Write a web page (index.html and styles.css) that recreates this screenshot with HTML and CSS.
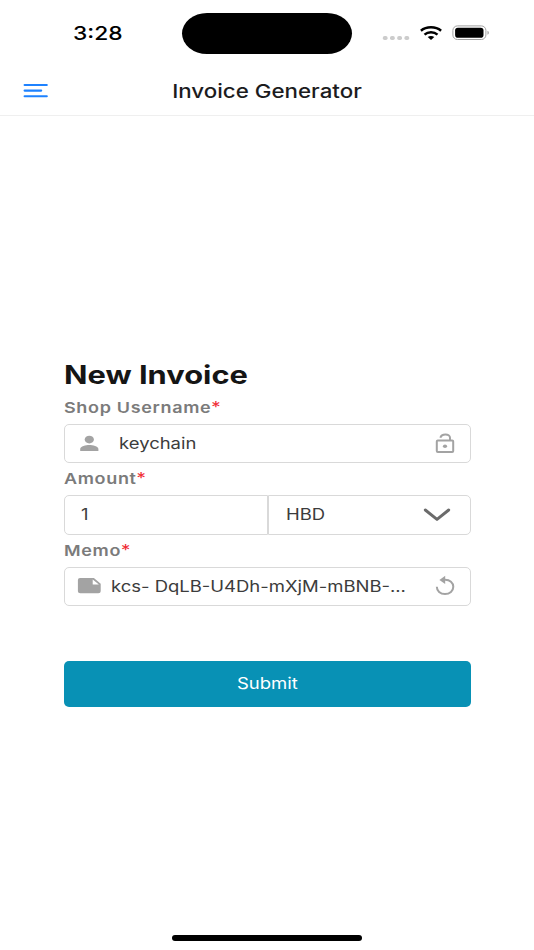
FILE: index.html
```
<!DOCTYPE html>
<html lang="en">

<head>
    <meta charset="UTF-8">
    <meta name="viewport" content="width=device-width, initial-scale=1.0">
    <title>Invoice Generator</title>
    <link rel="stylesheet" href="styles.css">
</head>

<body>
    <!-- Status bar -->
    <div class="status-bar">
        <div class="status-time"><span class="wide">3:28</span></div>
        <div class="island"></div>
        <div class="status-icons">
            <svg class="signal" width="28" height="6" viewBox="0 0 28 6" fill="#ccc">
                <rect x="0.8" y="1" width="4.8" height="4" rx="1.8" />
                <rect x="8" y="1" width="4.8" height="4" rx="1.8" />
                <rect x="15.2" y="1" width="4.8" height="4" rx="1.8" />
                <rect x="22.4" y="1" width="4.8" height="4" rx="1.8" />
            </svg>
            <svg class="wifi" width="22" height="14" viewBox="0 0 22 14" fill="none" stroke="#000" stroke-width="2.5">
                <path d="M0.9 4.8C6.4 0.2 15.6 0.2 21.1 4.8" />
                <path d="M4.5 8.6C8 5.6 14 5.6 17.5 8.6" />
                <path d="M7.7 11.1C9.5 9.5 12.5 9.5 14.3 11.1L11 13.9Z" fill="#000" stroke="none" />
            </svg>
            <svg class="battery" width="38" height="16" viewBox="0 0 38 16">
                <rect x="0.9" y="0.9" width="33" height="13.6" rx="4.5" fill="none" stroke="#a0a0a0" />
                <rect x="3.1" y="2.8" width="28.4" height="9.9" rx="2.8" />
                <path d="M35.5 5.7C37.3 6.3 37.3 9.2 35.5 9.8Z" fill="#999" />
            </svg>
        </div>
    </div>

    <!-- Header -->
    <header class="header">
        <button class="menu-button" aria-label="Menu">
            <svg width="26" height="16" viewBox="0 0 26 16" fill="none" stroke="#1e82ff" stroke-width="2.1" stroke-linecap="round">
                <path d="M1.6 2H23.8M1.6 7.6H18.2M1.6 13.2H23.8" />
            </svg>
        </button>
        <h1 class="header-title"><span class="wide">Invoice Generator</span></h1>
    </header>

    <!-- Invoice form -->
    <main>
        <h2 class="form-title"><span class="wide">New Invoice</span></h2>

        <div class="label"><span class="wide">Shop Username<span class="required">*</span></span></div>
        <div class="field">
            <svg class="icon-left" width="26" height="20" viewBox="0 0 26 20" fill="#a3a3a3">
                <ellipse cx="13.3" cy="5.6" rx="4.6" ry="3.9" />
                <path d="M4.2 17V15C4.2 12.5 10 11.1 13.3 11.1S22.4 12.5 22.4 15V17Z" />
            </svg>
            <span class="value username"><span class="wide">keychain</span></span>
            <svg class="icon-right" width="22" height="22" viewBox="0 0 22 22" fill="none" stroke="#a3a3a3" stroke-width="2">
                <rect x="2.8" y="7.6" width="16.4" height="11.4" rx="1" />
                <path d="M6.4 4.8C7.3 0.4 16 0.2 16 4.8V7.6" />
                <ellipse cx="11" cy="13.3" rx="2.1" ry="1.8" fill="#a3a3a3" stroke="none" />
            </svg>
        </div>

        <div class="label"><span class="wide">Amount<span class="required">*</span></span></div>
        <div class="field-row">
            <div class="field amount"><span class="value"><span class="wide">1</span></span></div>
            <div class="field currency">
                <span class="value"><span class="wide">HBD</span></span>
                <svg class="chevron" width="28" height="14" viewBox="0 0 28 14" fill="none" stroke="#6b6b6b" stroke-width="2.9" stroke-linecap="round" stroke-linejoin="round">
                    <path d="M2.3 2L14 11.4L25.7 2" />
                </svg>
            </div>
        </div>

        <div class="label"><span class="wide">Memo<span class="required">*</span></span></div>
        <div class="field">
            <svg class="icon-left" width="26" height="20" viewBox="0 0 26 20" fill="#a3a3a3">
                <path fill-rule="evenodd" d="M4 2.1H17.9L24.7 7.7V15.3Q24.7 17.2 22.3 17.2H4.3Q1.9 17.2 1.9 15.3V4Q1.9 2.1 4 2.1ZM16.7 3.5V8.4H22.9Z" />
            </svg>
            <span class="value memo"><span class="wide">kcs- DqLB-U4Dh-mXjM-mBNB-...</span></span>
            <svg class="icon-right" width="22" height="22" viewBox="0 0 22 22" fill="none" stroke="#a3a3a3" stroke-width="2">
                <path d="M10.5 4.8C16 4.5 19.3 7.8 19.3 11.8C19.3 15.8 15.8 19 11 19C6.2 19 2.8 15.8 2.8 11.8" />
                <path d="M11.2 0.8V9L5.4 4.9Z" fill="#a3a3a3" stroke="none" />
            </svg>
        </div>

        <button class="submit"><span class="wide">Submit</span></button>
    </main>

    <div class="home-indicator"></div>
</body>

</html>
```
FILE: styles.css
```
* {
    box-sizing: border-box;
}

body {
    margin: 0;
    height: 950px;
    display: flex;
    flex-direction: column;
    background: #fff;
    color: #1c1c1e;
    font-family: Inter, "Liberation Sans", sans-serif;
    overflow: hidden;
}

svg {
    display: block;
    flex-shrink: 0;
}

button {
    border: 0;
    padding: 0;
    background: none;
    font-family: inherit;
}

/* Extended letterforms */
.wide {
    display: inline-block;
    white-space: nowrap;
    transform: scaleX(1.2);
    transform-origin: left center;
}

/* Status bar */
.status-bar {
    display: grid;
    grid-template-columns: 182px 170px 1fr;
    height: 66px;
    padding-top: 13px;
}

.status-time {
    padding-left: 73px;
    font-size: 19px;
    font-weight: 500;
    line-height: 41px;
    color: #000;
}

.island {
    height: 41px;
    border-radius: 25px / 20.5px;
    background: #000;
}

.status-icons {
    display: flex;
    align-items: center;
    height: 40px;
    padding-left: 30px;
}

.signal {
    margin-top: 9px;
}

.wifi {
    margin-left: 10px;
}

.battery {
    margin-left: 10px;
}

/* Header */
.header {
    display: grid;
    grid-template-columns: 60px 1fr 60px;
    align-items: center;
    height: 50px;
    border-bottom: 1px solid #efefef;
}

.menu-button {
    padding-left: 23px;
}

.header-title {
    margin: 0;
    text-align: center;
    font-size: 18.6px;
    font-weight: 500;
    line-height: 22px;
}

.header-title .wide,
.submit .wide {
    transform-origin: center;
}

/* Form */
main {
    flex: 1;
    padding: 242px 63.5px 0;
}

.form-title {
    margin: 0;
    font-size: 25.7px;
    font-weight: 700;
    line-height: 34px;
    color: #151515;
}

.label {
    height: 32px;
    font-size: 15px;
    font-weight: 600;
    line-height: 32.4px;
    letter-spacing: 0.55px;
    color: #7b7b7b;
}

.required {
    color: #f02d35;
    font-size: 15.5px;
    font-weight: 400;
}

.field {
    display: flex;
    align-items: center;
    height: 39.3px;
    border: 1.5px solid #d9d9d9;
    border-radius: 5px;
    font-size: 15.4px;
    color: #3c3c3c;
}

.value {
    flex: 1;
}

.icon-left {
    margin-left: 11px;
}

.icon-right {
    margin-right: 14px;
}

.username {
    padding-left: 17px;
}

.memo {
    padding-left: 9px;
}

.field-row {
    display: flex;
}

.amount {
    width: 204px;
    padding-left: 16px;
    border-radius: 5px 0 0 5px;
}

.currency {
    flex: 1;
    padding: 0 19px 0 17px;
    border-radius: 0 5px 5px 0;
}

.submit {
    width: 100%;
    height: 46px;
    margin-top: 55px;
    border-radius: 5px;
    background: #0891b5;
    color: #fff;
    font-size: 15.4px;
    font-weight: 400;
}

.home-indicator {
    width: 190px;
    height: 6px;
    margin: 0 auto 9px;
    border-radius: 3px;
    background: #000;
}
```
